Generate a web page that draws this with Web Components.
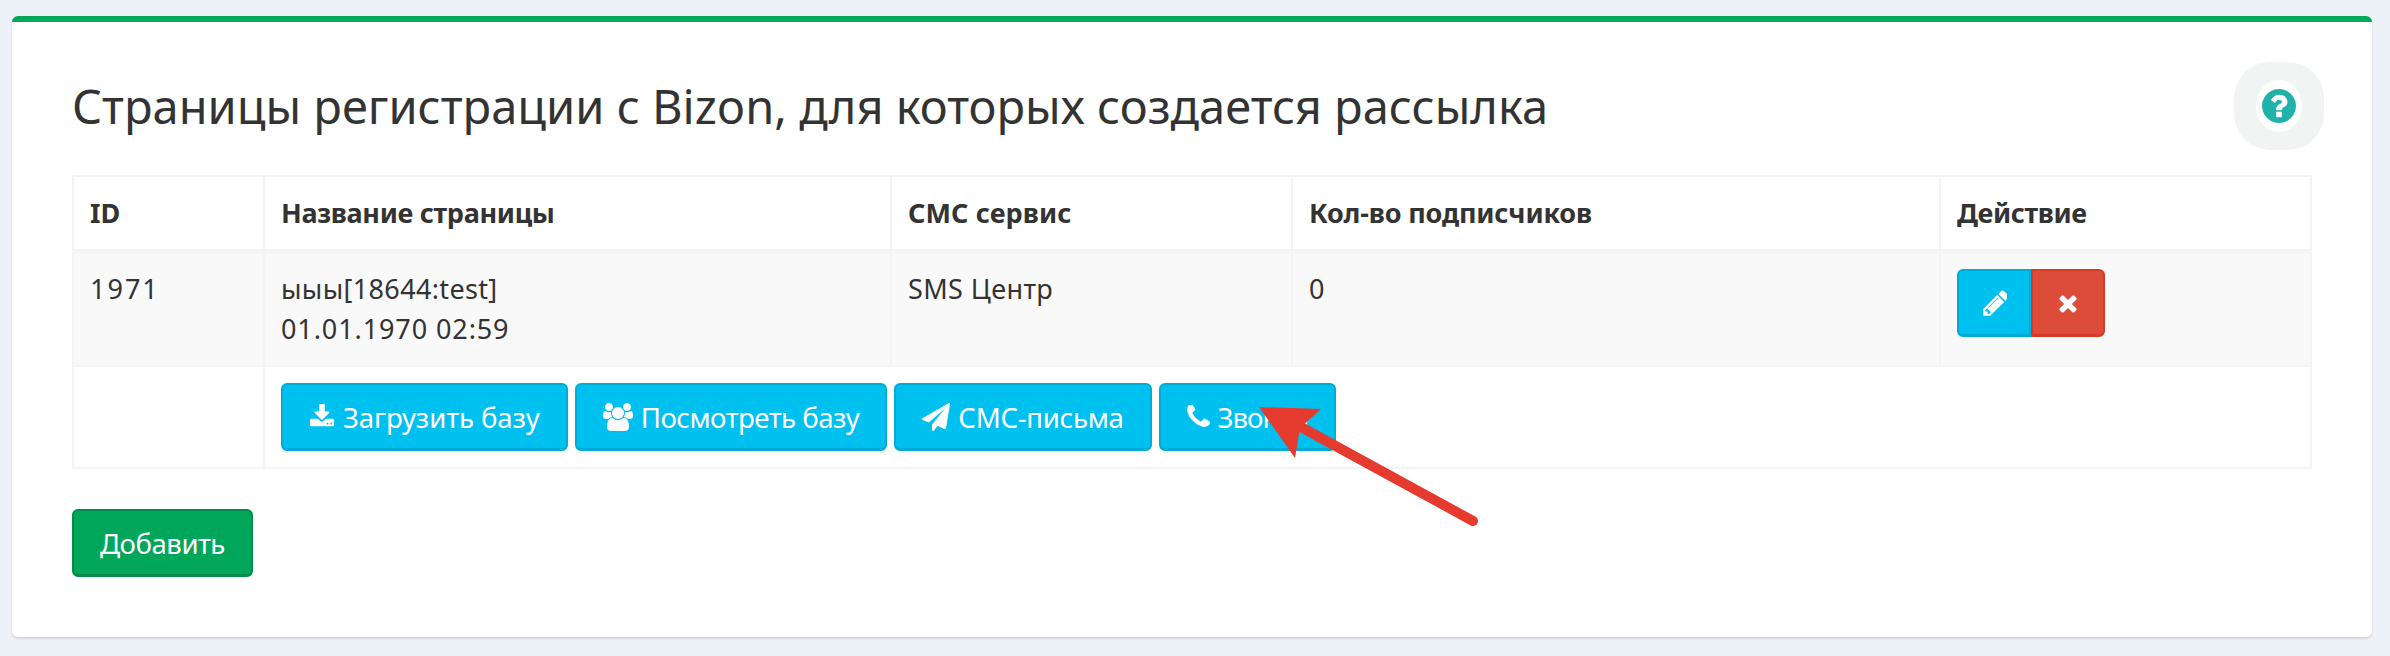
<!DOCTYPE html>
<html lang="ru"><head><meta charset="utf-8"><title>Страницы регистрации</title>
<style>
html,body{margin:0;padding:0;background:#ecf0f7;height:656px;overflow:hidden}
body{font-family:"Noto Sans","Open Sans",sans-serif;font-size:27px;line-height:40px;color:#333}
</style></head><body>
<app-page>
  <mail-card>
    <span slot="title">Страницы регистрации с Bizon, для которых создается рассылка</span>
    <help-badge slot="aside"></help-badge>
    <pages-table></pages-table>
    <div slot="footer"><ui-btn kind="success" style="letter-spacing:-.5px">Добавить</ui-btn></div>
  </mail-card>
  <pointer-arrow></pointer-arrow>
</app-page>
<script>
const ICONS={
download:['0 0 1792 1792',"M1344 1344q0-26-19-45t-45-19-45 19-19 45 19 45 45 19 45-19 19-45zm256 0q0-26-19-45t-45-19-45 19-19 45 19 45 45 19 45-19 19-45zm128-224v320q0 40-28 68t-68 28h-1472q-40 0-68-28t-28-68v-320q0-40 28-68t68-28h465l135 136q58 56 136 56t136-56l136-136h464q40 0 68 28t28 68zm-325-569q17 41-14 70l-448 448q-18 19-45 19t-45-19l-448-448q-31-29-14-70 17-39 59-39h256v-448q0-26 19-45t45-19h256q26 0 45 19t19 45v448h256q42 0 59 39z"],
users:['0 0 1920 1792',"M593 896q-162 5-265 128h-134q-82 0-138-40.500t-56-118.500q0-353 124-353 6 0 43.500 21t97.500 42.500 119 21.500q67 0 133-23-5 37-5 66 0 139 81 256zm1071 637q0 120-73 189.500t-194 69.500h-874q-121 0-194-69.500t-73-189.500q0-53 3.500-103.500t14-109 26.500-108.500 43-97.500 62-81 85.500-53.500 111.500-20q10 0 43 21.500t73 48 107 48 135 21.500 135-21.500 107-48 73-48 43-21.500q61 0 111.500 20t85.500 53.500 62 81 43 97.500 26.500 108.500 14 109 3.500 103.500zm-1024-1277q0 106-75 181t-181 75-181-75-75-181 75-181 181-75 181 75 75 181zm704 384q0 159-112.500 271.500t-271.500 112.500-271.500-112.500-112.500-271.500 112.500-271.500 271.500-112.500 271.500 112.500 112.500 271.500zm576 225q0 78-56 118.500t-138 40.500h-134q-103-123-265-128 81-117 81-256 0-29-5-66 66 23 133 23 59 0 119-21.500t97.500-42.500 43.500-21q124 0 124 353zm-128-609q0 106-75 181t-181 75-181-75-75-181 75-181 181-75 181 75 75 181z"],
send:['0 0 1792 1792',"M1764 11q33 24 27 64l-256 1536q-5 29-32 45-14 8-31 8-11 0-24-5l-453-185-242 295q-18 23-49 23-13 0-22-4-19-7-30.500-23.500t-11.500-36.500v-349l864-1059-1069 925-395-162q-37-14-40-55-2-40 32-59l1664-960q15-9 32-9 20 0 36 11z"],
phone:['192 192 1408 1408',"M1600 1240q0 27-10 70.500t-21 68.500q-21 50-122 106-94 51-186 51-27 0-53-3.500t-57.500-12.500-47-14.500-55.500-20.500-49-18q-98-35-175-83-127-79-264-216t-216-264q-48-77-83-175-3-9-18-49t-20.500-55.500-14.500-47-12.500-57.500-3.500-53q0-92 51-186 56-101 106-122 25-11 68.500-21t70.500-10q14 0 21 3 18 6 53 76 11 19 30 54t35 63.500 31 53.500q3 4 17.500 25t21.500 35.500 7 28.500q0 20-28.500 50t-62 55-62 53-28.500 46q0 9 5 22.500t8.500 20.500 14 24 11.500 19q76 137 174 235t235 174q2 1 19 11.500t24 14 20.500 8.500 22.500 5q18 0 46-28.500t53-62 55-62 50-28.500q14 0 28.500 7t35.500 21.500 25 17.500q25 15 53.500 31t63.500 35 54 30q70 35 76 53 3 7 3 21z"],
pencil:['0 0 1536 1792',"M491 1536l91-91-235-235-91 91v107h128v128h107zm523-928q0-22-22-22-10 0-17 7l-542 542q-7 7-7 17 0 22 22 22 10 0 17-7l542-542q7-7 7-17zm-54-192l416 416-832 832h-416v-416zm683 96q0 53-37 90l-166 166-416-416 166-165q36-38 90-38 53 0 91 38l235 234q37 39 37 91z"],
times:['0 0 1792 1792',"M1490 1322q0 40-28 68l-136 136q-28 28-68 28t-68-28l-294-294-294 294q-28 28-68 28t-68-28l-136-136q-28-28-28-68t28-68l294-294-294-294q-28-28-28-68t28-68l136-136q28-28 68-28t68 28l294 294 294-294q28-28 68-28t68 28l136 136q28 28 28 68t-28 68l-294 294 294 294q28 28 28 68z"],
help:['128 128 1536 1536',"M1024 1376v-192q0-14-9-23t-23-9h-192q-14 0-23 9t-9 23v192q0 14 9 23t23 9h192q14 0 23-9t9-23zm256-672q0-88-55.500-163t-138.500-116-170-41q-243 0-371 213-15 24 8 42l132 100q7 6 19 6 16 0 25-12 53-68 86-92 34-24 86-24 48 0 85.500 26t37.500 59q0 38-20 61t-68 45q-63 28-115.500 86.500t-52.500 125.500v36q0 14 9 23t23 9h192q14 0 23-9t9-23q0-19 21.500-49.500t54.500-49.500q32-18 49-28.500t46-35 44.500-48 28-60.500 12.500-81zm384 192q0 209-103 385.500t-279.500 279.500-385.500 103-385.500-103-279.500-279.500-103-385.500 103-385.500 279.500-279.500 385.500-103 385.500 103 279.500 279.500 103 385.500z"]};
function shadow(el,html){const r=el.attachShadow({mode:'open'});r.innerHTML=html;return r}
class FaIcon extends HTMLElement{connectedCallback(){if(this.shadowRoot)return;
 const [vb,d]=ICONS[this.getAttribute('name')];const w=this.getAttribute('w')||24,h=this.getAttribute('h')||24;
 shadow(this,`<style>:host{display:inline-block;line-height:0}svg{display:block;fill:currentColor}</style><svg width="${w}" height="${h}" viewBox="${vb}"><path d="${d}"/></svg>`)}}
class UiBtn extends HTMLElement{connectedCallback(){if(this.shadowRoot)return;
 const k=this.getAttribute('kind')||'info';
 const c={info:['#00c0ef','#00acd6'],success:['#00a65a','#008d4c'],danger:['#dd4b39','#d73925']}[k];
 shadow(this,`<style>:host{display:inline-flex;align-items:center;box-sizing:border-box;height:68px;padding:0 26px;gap:8px;background:${c[0]};border:2px solid ${c[1]};border-bottom-width:3px;border-radius:6px;color:#fff;font-size:27.6px;line-height:40px;white-space:nowrap}</style><slot></slot>`)}}
class MailCard extends HTMLElement{constructor(){super();shadow(this,`<style>
:host{display:block;box-sizing:border-box;margin:16px 18px 0 12px;height:621px;background:#fff;border-top:6px solid #00a65a;border-radius:6px;box-shadow:0 2px 2px rgba(0,0,0,.1);padding:40px 60px 60px}
.head{display:flex;align-items:center;justify-content:space-between;height:88px;margin-bottom:25px}
h1{margin:0;font-weight:400;font-size:47px;line-height:56px;color:#333}
.foot{margin-top:40px}
</style><div class="head"><h1><slot name="title"></slot></h1><slot name="aside"></slot></div><slot></slot><div class="foot"><slot name="footer"></slot></div>`)}}
class HelpBadge extends HTMLElement{constructor(){super();shadow(this,`<style>
:host{display:flex;align-items:center;justify-content:center;width:90px;height:88px;margin-right:-12px;background:#f2f4f4;border-radius:36px}
.in{width:46px;height:52px;border-radius:50%;background:#fff;display:flex;align-items:center;justify-content:center;color:#20b2aa}
</style><div class="in"><fa-icon name="help" w="34" h="34"></fa-icon></div>`)}}
class PagesTable extends HTMLElement{constructor(){super();shadow(this,`<style>
:host{display:block;font-size:27px;line-height:40px;color:#333}
table{width:2240px;table-layout:fixed;border-collapse:collapse;margin:0}
th,td{border:2px solid #f4f4f4;padding:16px;text-align:left;vertical-align:top;font-weight:400}
th{font-weight:700;border-bottom-width:4px}
tr.alt td{background:#f9f9f9}
.row{display:flex;gap:7px}
.grp{display:flex}
.grp ui-btn{width:74px;padding:0;justify-content:center}
.grp ui-btn:first-child{border-radius:6px 0 0 6px}
.grp ui-btn:last-child{border-radius:0 6px 6px 0}
</style>
<table><colgroup><col style="width:191px"><col style="width:627px"><col style="width:401px"><col style="width:648px"><col style="width:371px"></colgroup>
<thead><tr><th>ID</th><th style="letter-spacing:-.33px">Название страницы</th><th style="letter-spacing:.1px">СМС сервис</th><th style="letter-spacing:-.16px">Кол-во подписчиков</th><th style="letter-spacing:-.4px">Действие</th></tr></thead>
<tbody><tr class="alt"><td style="letter-spacing:2px">1971</td><td><span style="letter-spacing:.35px">ыыы[18644:test]</span><br><span style="letter-spacing:.9px">01.01.1970 02:59</span></td><td style="letter-spacing:.4px">SMS Центр</td><td>0</td>
<td><div class="grp"><ui-btn><fa-icon name="pencil" w="26" h="30"></fa-icon></ui-btn><ui-btn kind="danger"><fa-icon name="times" w="26" h="26"></fa-icon></ui-btn></div></td></tr>
<tr><td></td><td colspan="4"><div class="row">
<ui-btn style="letter-spacing:-.1px"><fa-icon name="download" w="26" h="26"></fa-icon>Загрузить базу</ui-btn>
<ui-btn style="letter-spacing:-.5px"><fa-icon name="users" w="30" h="28"></fa-icon>Посмотреть базу</ui-btn>
<ui-btn style="letter-spacing:-.3px"><fa-icon name="send" w="28" h="28"></fa-icon>СМС-письма</ui-btn>
<ui-btn style="letter-spacing:-1px"><fa-icon name="phone" w="23" h="23"></fa-icon>Звонки</ui-btn>
</div></td></tr></tbody></table>`)}}
class PointerArrow extends HTMLElement{constructor(){super();shadow(this,`<style>:host{position:absolute;left:0;top:0;width:2390px;height:656px;pointer-events:none}svg{display:block}</style>
<svg width="2390" height="656" viewBox="0 0 2390 656"><path d="M1299 426L1473 521" stroke="#e53b2f" stroke-width="10" stroke-linecap="round"/><path d="M1259 407L1321 409L1300 428L1295 458Z" fill="#e53b2f"/></svg>`)}}
class AppPage extends HTMLElement{constructor(){super();shadow(this,`<style>:host{display:block;position:relative;height:656px;overflow:hidden}</style><slot></slot>`)}}
customElements.define('fa-icon',FaIcon);customElements.define('ui-btn',UiBtn);customElements.define('mail-card',MailCard);customElements.define('help-badge',HelpBadge);customElements.define('pages-table',PagesTable);customElements.define('pointer-arrow',PointerArrow);customElements.define('app-page',AppPage);
</script></body></html>
